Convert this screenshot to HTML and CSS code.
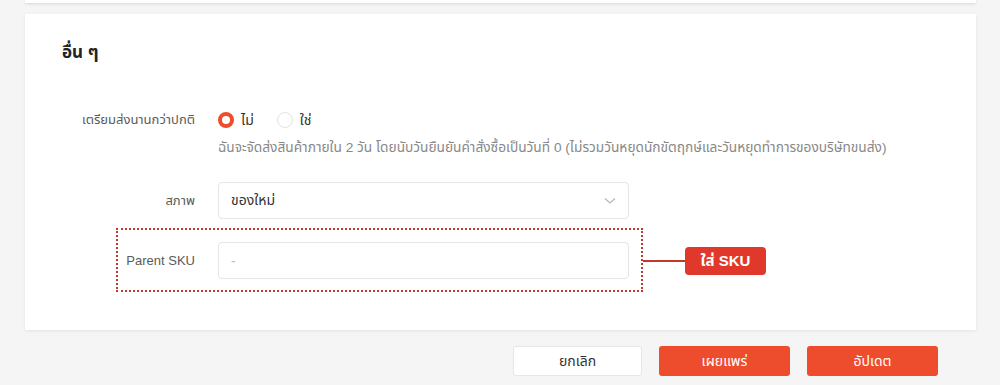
FILE: index.html
```html
<!DOCTYPE html>
<html lang="th">
<head>
<meta charset="utf-8">
<link rel="stylesheet" href="styles.css">
</head>
<body>
<div class="topcard"></div>
<section class="card">
  <h2 class="title">อื่น ๆ</h2>
  <div class="row row-pre">
    <div class="label">เตรียมส่งนานกว่าปกติ</div>
    <div class="field">
      <div class="radios">
        <label class="radio"><span class="dot on"></span>ไม่</label>
        <label class="radio"><span class="dot"></span>ใช่</label>
      </div>
      <div class="help">ฉันจะจัดส่งสินค้าภายใน 2 วัน โดยนับวันยืนยันคำสั่งซื้อเป็นวันที่ 0 (ไม่รวมวันหยุดนักขัตฤกษ์และวันหยุดทำการของบริษัทขนส่ง)</div>
    </div>
  </div>
  <div class="row row-cond">
    <div class="label">สภาพ</div>
    <div class="field">
      <div class="select">
        <span>ของใหม่</span>
        <svg class="chev" width="12" height="8" viewBox="0 0 12 8"><path d="M1 1.5l5 4.5 5-4.5" fill="none" stroke="#b5b5b5" stroke-width="1.2"/></svg>
      </div>
    </div>
  </div>
  <div class="row row-sku">
    <div class="label">Parent SKU</div>
    <div class="field">
      <div class="input">-</div>
    </div>
    <div class="highlight"></div>
    <div class="connector"></div>
    <div class="badge">ใส่ SKU</div>
  </div>
</section>
<div class="actions">
  <button class="btn btn-ghost">ยกเลิก</button>
  <button class="btn btn-primary">เผยแพร่</button>
  <button class="btn btn-primary">อัปเดต</button>
</div>
</body>
</html>
```

FILE: styles.css
```css
* { box-sizing: border-box; }
html, body { margin: 0; padding: 0; }
body {
  background: #f5f5f5;
  font-family: "Liberation Sans", "Noto Sans", "Noto Sans Thai", sans-serif;
  width: 1000px;
  height: 385px;
  overflow: hidden;
  color: #333;
}
.topcard {
  margin: 0 24px 0 25px;
  height: 3px;
  background: #fff;
  box-shadow: 0 1px 3px rgba(0,0,0,0.12);
}
.card {
  margin: 11px 24px 0 25px;
  height: 316px;
  background: #fff;
  box-shadow: 0 1px 3px rgba(0,0,0,0.08);
  padding-top: 28px;
}
.title {
  margin: 0 0 0 37px;
  font-size: 17px;
  line-height: 22px;
  font-weight: bold;
  color: #222;
}
.row {
  display: flex;
  gap: 23px;
  position: relative;
}
.label {
  width: 170px;
  flex: none;
  text-align: right;
  font-size: 13px;
  color: #5a5a5a;
}
.field { flex: none; width: 411px; }
.row-pre { margin-top: 46px; }
.row-pre .label { line-height: 20px; }
.radios { display: flex; gap: 23px; height: 20px; align-items: center; }
.radio { display: flex; align-items: center; gap: 7px; font-size: 14px; color: #333; }
.dot {
  width: 16px; height: 16px; border-radius: 50%;
  border: 1px solid #e2e2e2; background: #fff;
}
.dot.on { border: 4.5px solid #ee4d2d; }
.help {
  margin-top: 9px;
  font-size: 13.7px;
  line-height: 18px;
  color: #888;
  white-space: nowrap;
}
.row-cond { margin-top: 25px; align-items: center; }
.select, .input {
  height: 37px;
  border: 1px solid #e5e5e5;
  border-radius: 4px;
  display: flex;
  align-items: center;
  padding: 0 12px;
  font-size: 14px;
}
.select { justify-content: space-between; color: #333; }
.row-cond .label { line-height: 37px; }
.row-sku { margin-top: 23px; align-items: center; }
.row-sku .label { line-height: 37px; }
.input { color: #bbb; }
.highlight {
  position: absolute;
  left: 91px; top: -14px;
  width: 527px; height: 64px;
  border: 2px dotted #c4372c;
  pointer-events: none;
}
.connector {
  position: absolute;
  left: 618px; top: 18px;
  width: 42px; height: 2px;
  background: #c4372c;
}
.badge {
  position: absolute;
  left: 660px; top: 5px;
  width: 81px; height: 28px;
  border-radius: 4px;
  background: #e0392b;
  color: #fff;
  font-size: 15px;
  font-weight: bold;
  display: flex; align-items: center; justify-content: center;
}
.actions {
  display: flex;
  justify-content: flex-end;
  gap: 17px;
  margin: 16px 62px 0 0;
}
.btn {
  height: 30px;
  border-radius: 3px;
  font-family: inherit;
  font-size: 14px;
  border: 1px solid transparent;
  cursor: pointer;
}
.btn-ghost { width: 129px; background: #fff; border-color: #e6e6e6; color: #333; }
.btn-primary { width: 131px; background: #ee4d2d; color: #fff; }
```
